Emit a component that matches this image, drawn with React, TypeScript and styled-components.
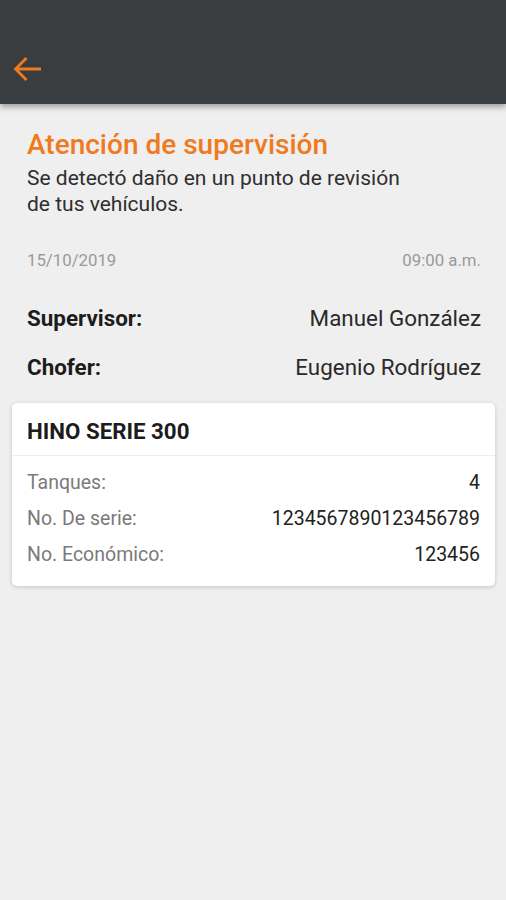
import styled, { createGlobalStyle } from 'styled-components';

const GlobalStyle = createGlobalStyle`
    html, body {
        margin: 0;
        padding: 0;
        background: #efefef;
        font-family: Roboto, 'Noto Sans', sans-serif;
    }
`;

const Page = styled.div`
    width: 506px;
    min-height: 900px;
    background: #efefef;
`;

const TopBar = styled.header`
    height: 104px;
    background: #3a3d40;
    box-shadow: 0 3px 6px rgba(0, 0, 0, 0.35);
    display: flex;
    align-items: flex-end;
    padding: 0 0 20px 12px;
    box-sizing: border-box;
`;

const BackButton = styled.button`
    background: none;
    border: none;
    padding: 0;
    width: 30px;
    height: 30px;
    display: flex;
    cursor: pointer;
`;

const Content = styled.main`
    padding: 25px 25px 0 27px;
`;

const Title = styled.h1`
    margin: 0;
    font-size: 28px;
    font-weight: 500;
    color: #f07a1e;
    line-height: 32px;
`;

const Message = styled.p`
    margin: 4px 0 0;
    width: 380px;
    font-size: 21px;
    line-height: 26px;
    color: #2e2e2e;
`;

const Row = styled.div<{ $top: number; $height: number }>`
    display: flex;
    justify-content: space-between;
    align-items: center;
    margin-top: ${(p) => p.$top}px;
    line-height: ${(p) => p.$height}px;
`;

const Meta = styled.span`
    font-size: 16.8px;
    color: #9a9a9a;
`;

const Label = styled.span`
    font-size: 22.4px;
    font-weight: 700;
    color: #1c1c1c;
`;

const Value = styled.span`
    font-size: 22.4px;
    color: #2a2a2a;
`;

const Card = styled.section`
    margin: 23px 11px 0 12px;
    background: #fff;
    border-radius: 5px;
    box-shadow: 0 1px 4px rgba(0, 0, 0, 0.18);
`;

const CardHeader = styled.div`
    height: 53px;
    padding: 3px 15px 0;
    box-sizing: border-box;
    display: flex;
    align-items: center;
    font-size: 22.3px;
    font-weight: 700;
    color: #1c1c1c;
    border-bottom: 1px solid #eeeeee;
`;

const CardBody = styled.div`
    padding: 8px 15px 14px 15px;
`;

const CardRow = styled.div`
    display: flex;
    justify-content: space-between;
    align-items: center;
    height: 36px;
    font-size: 19.5px;
`;

const CardLabel = styled.span`
    color: #7a7a7a;
`;

const CardValue = styled.span`
    color: #222;
`;

export default function App() {
    const details = [
        { label: 'Tanques:', value: '4' },
        { label: 'No. De serie:', value: '1234567890123456789' },
        { label: 'No. Económico:', value: '123456' },
    ];

    return (
        <Page>
            <GlobalStyle />
            <TopBar>
                <BackButton aria-label="Regresar">
                    <svg width="30" height="30" viewBox="0 0 30 30" fill="none">
                        <path d="M4 15H29M14.5 4L3.5 15l11 11" stroke="#f07a1e" strokeWidth="2.8" />
                    </svg>
                </BackButton>
            </TopBar>
            <Content>
                <Title>Atención de supervisión</Title>
                <Message>Se detectó daño en un punto de revisión de tus vehículos.</Message>
                <Row $top={33} $height={20}>
                    <Meta>15/10/2019</Meta>
                    <Meta>09:00 a.m.</Meta>
                </Row>
                <Row $top={35} $height={26}>
                    <Label>Supervisor:</Label>
                    <Value>Manuel González</Value>
                </Row>
                <Row $top={23} $height={26}>
                    <Label>Chofer:</Label>
                    <Value>Eugenio Rodríguez</Value>
                </Row>
            </Content>
            <Card>
                <CardHeader>HINO SERIE 300</CardHeader>
                <CardBody>
                    {details.map((d) => (
                        <CardRow key={d.label}>
                            <CardLabel>{d.label}</CardLabel>
                            <CardValue>{d.value}</CardValue>
                        </CardRow>
                    ))}
                </CardBody>
            </Card>
        </Page>
    );
}
